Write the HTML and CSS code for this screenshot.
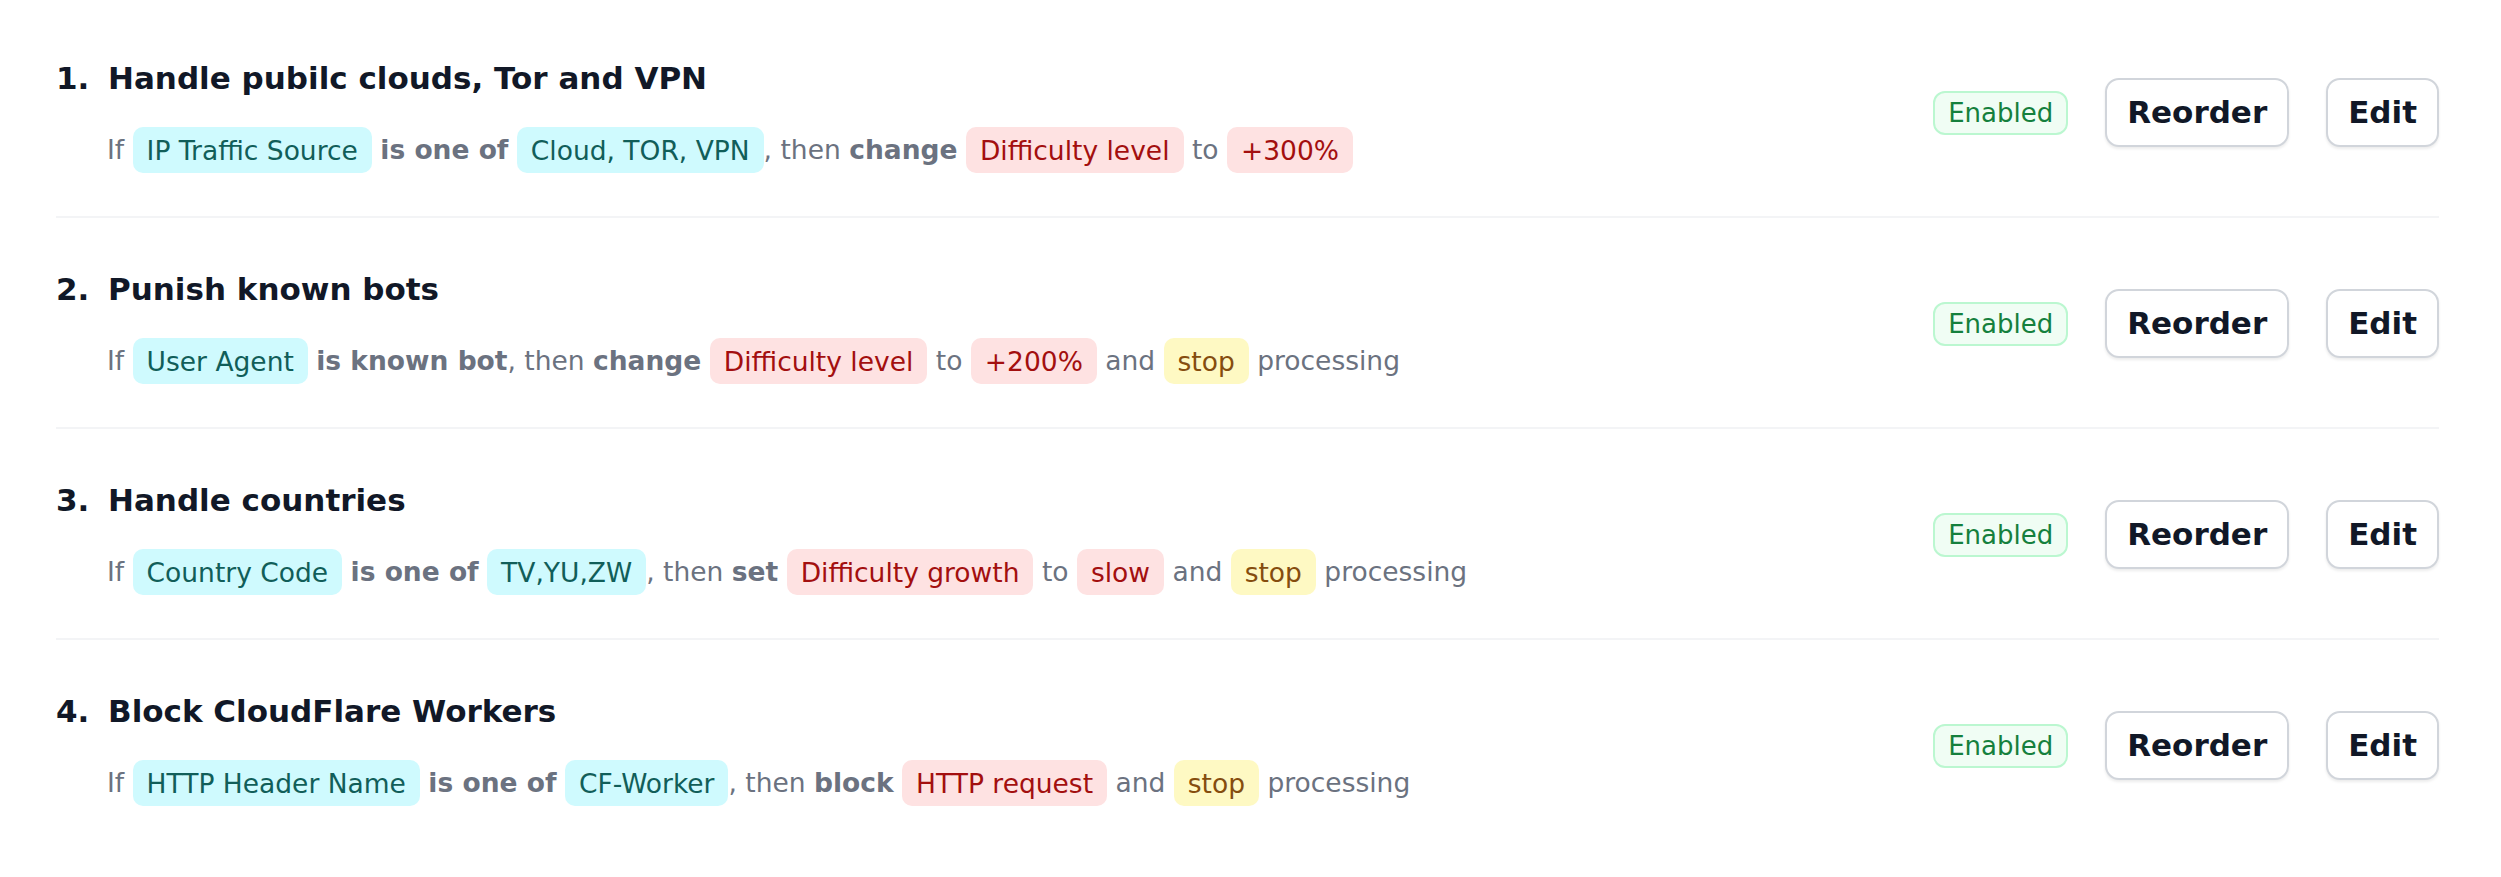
FILE: index.html
```html
<!DOCTYPE html>
<html lang="en">
<head>
<meta charset="utf-8">
<title>Rules</title>
<link rel="stylesheet" href="styles.css">
</head>
<body>
<div class="rules">
  <div class="rule">
    <div class="rule-main">
      <div class="rule-title"><span class="num">1.</span><span>Handle pubilc clouds, Tor and VPN</span></div>
      <div class="rule-desc">If <span class="pill cyan">IP Traffic Source</span> <b>is one of</b> <span class="pill cyan">Cloud, TOR, VPN</span>, then <b>change</b> <span class="pill red">Difficulty level</span> to <span class="pill red">+300%</span></div>
    </div>
    <div class="rule-actions">
      <span class="badge">Enabled</span>
      <button class="btn">Reorder</button>
      <button class="btn">Edit</button>
    </div>
  </div>
  <div class="rule">
    <div class="rule-main">
      <div class="rule-title"><span class="num">2.</span><span>Punish known bots</span></div>
      <div class="rule-desc">If <span class="pill cyan">User Agent</span> <b>is known bot</b>, then <b>change</b> <span class="pill red">Difficulty level</span> to <span class="pill red">+200%</span> and <span class="pill yellow">stop</span> processing</div>
    </div>
    <div class="rule-actions">
      <span class="badge">Enabled</span>
      <button class="btn">Reorder</button>
      <button class="btn">Edit</button>
    </div>
  </div>
  <div class="rule">
    <div class="rule-main">
      <div class="rule-title"><span class="num">3.</span><span>Handle countries</span></div>
      <div class="rule-desc">If <span class="pill cyan">Country Code</span> <b>is one of</b> <span class="pill cyan">TV,YU,ZW</span>, then <b>set</b> <span class="pill red">Difficulty growth</span> to <span class="pill red">slow</span> and <span class="pill yellow">stop</span> processing</div>
    </div>
    <div class="rule-actions">
      <span class="badge">Enabled</span>
      <button class="btn">Reorder</button>
      <button class="btn">Edit</button>
    </div>
  </div>
  <div class="rule">
    <div class="rule-main">
      <div class="rule-title"><span class="num">4.</span><span>Block CloudFlare Workers</span></div>
      <div class="rule-desc">If <span class="pill cyan">HTTP Header Name</span> <b>is one of</b> <span class="pill cyan">CF-Worker</span>, then <b>block</b> <span class="pill red">HTTP request</span> and <span class="pill yellow">stop</span> processing</div>
    </div>
    <div class="rule-actions">
      <span class="badge">Enabled</span>
      <button class="btn">Reorder</button>
      <button class="btn">Edit</button>
    </div>
  </div>
</div>
</body>
</html>
```

FILE: styles.css
```css
html, body {
  margin: 0;
  padding: 0;
  background: #ffffff;
  font-family: "DejaVu Sans", sans-serif;
}

.rules {
  width: 2383px;
  margin-left: 56px;
  padding-top: 7px;
}

.rule {
  display: flex;
  align-items: center;
  justify-content: space-between;
  padding: 47px 0 45px;
  border-bottom: 2px solid #f3f4f6;
}

.rule:last-child {
  border-bottom: none;
}

.rule-title {
  display: flex;
  font-size: 31px;
  line-height: 49px;
  font-weight: 700;
  color: #111827;
}

.num {
  display: inline-block;
  width: 52px;
}

.rule-desc {
  margin-top: 26px;
  padding-left: 51px;
  font-size: 26.5px;
  line-height: 42px;
  color: #6b7280;
  white-space: nowrap;
}

.rule-desc b {
  font-weight: 700;
}

.pill {
  padding: 7.5px 14px;
  border-radius: 10px;
}

.cyan {
  background: #cffafe;
  color: #115e59;
}

.red {
  background: #fee2e2;
  color: #a30f0f;
}

.yellow {
  background: #fef9c3;
  color: #854d0e;
}

.rule-actions {
  display: flex;
  align-items: center;
  gap: 37px;
}

.badge {
  font-size: 26px;
  line-height: 36px;
  padding: 2px 13px;
  border: 2px solid #bbf7d0;
  background: #f0fdf4;
  color: #15803d;
  border-radius: 12px;
}

.btn {
  font-family: "DejaVu Sans", sans-serif;
  font-size: 31px;
  line-height: 49px;
  font-weight: 700;
  color: #111827;
  background: #ffffff;
  border: 2px solid #d1d5db;
  border-radius: 14px;
  padding: 8px 20px;
  box-shadow: 0 2px 3px rgba(0, 0, 0, 0.08);
  cursor: pointer;
}
```
